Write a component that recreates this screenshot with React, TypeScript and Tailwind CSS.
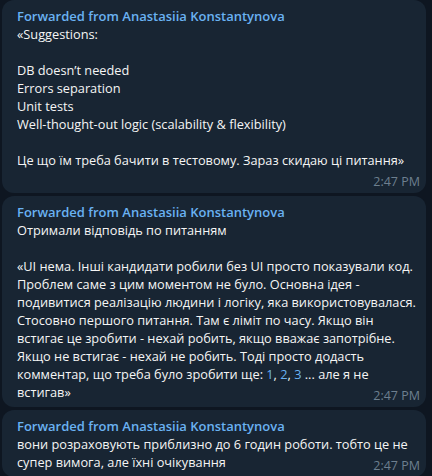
import React from 'react'

interface Message {
  id: number
  from: string
  text: React.ReactNode
  time: string
}

const messages: Message[] = [
  {
    id: 1,
    from: 'Anastasiia Konstantynova',
    text: `«Suggestions:

DB doesn’t needed
Errors separation
Unit tests
Well-thought-out logic (scalability & flexibility)

Це що їм треба бачити в тестовому. Зараз скидаю ці питання»`,
    time: '2:47 PM',
  },
  {
    id: 2,
    from: 'Anastasiia Konstantynova',
    text: (
      <>
        {`Отримали відповідь по питанням

«UI нема. Інші кандидати робили без UI просто показували код. Проблем саме з цим моментом не було. Основна ідея - подивитися реалізацію людини і логіку, яка використовувалася. Стосовно першого питання. Там є ліміт по часу. Якщо він встигає це зробити - нехай робить, якщо вважає запотрібне. Якщо не встигає - нехай не робить. Тоді просто додасть комментар, що треба було зробити ще: `}
        <span className="text-[#6ab2f2]">1</span>, <span className="text-[#6ab2f2]">2</span>, <span className="text-[#6ab2f2]">3</span>
        {` ... але я не встигав»`}
      </>
    ),
    time: '2:47 PM',
  },
  {
    id: 3,
    from: 'Anastasiia Konstantynova',
    text: 'вони розраховують приблизно до 6 годин роботи. тобто це не супер вимога, але їхні очікування',
    time: '2:47 PM',
  },
]

function Bubble({ msg }: { msg: Message }) {
  return (
    <div className="relative w-[424px] rounded-[12px] bg-[#182533] pl-[15px] pr-[10px] pt-[7px] pb-[6px]">
      <div className="text-[13px] leading-[18px] font-semibold text-[#6ab2f2]">
        Forwarded from {msg.from}
      </div>
      <div className="whitespace-pre-wrap text-[12.75px] leading-[18px] text-[#f5f5f5]">
        {msg.text}
        <span className="inline-block w-[54px]"></span>
      </div>
      <span className="absolute right-[6px] bottom-[2px] text-[12.5px] leading-[18px] text-[#6d7f8f]">
        {msg.time}
      </span>
    </div>
  )
}

export default function App() {
  return (
    <div
      className="w-[432px] h-[476px] overflow-hidden bg-[#0e1621] flex flex-col gap-[3px] pl-[2px]"
      style={{ fontFamily: '"Open Sans", "Noto Sans", sans-serif' }}
    >
      {messages.map((m) => (
        <Bubble key={m.id} msg={m} />
      ))}
    </div>
  )
}
